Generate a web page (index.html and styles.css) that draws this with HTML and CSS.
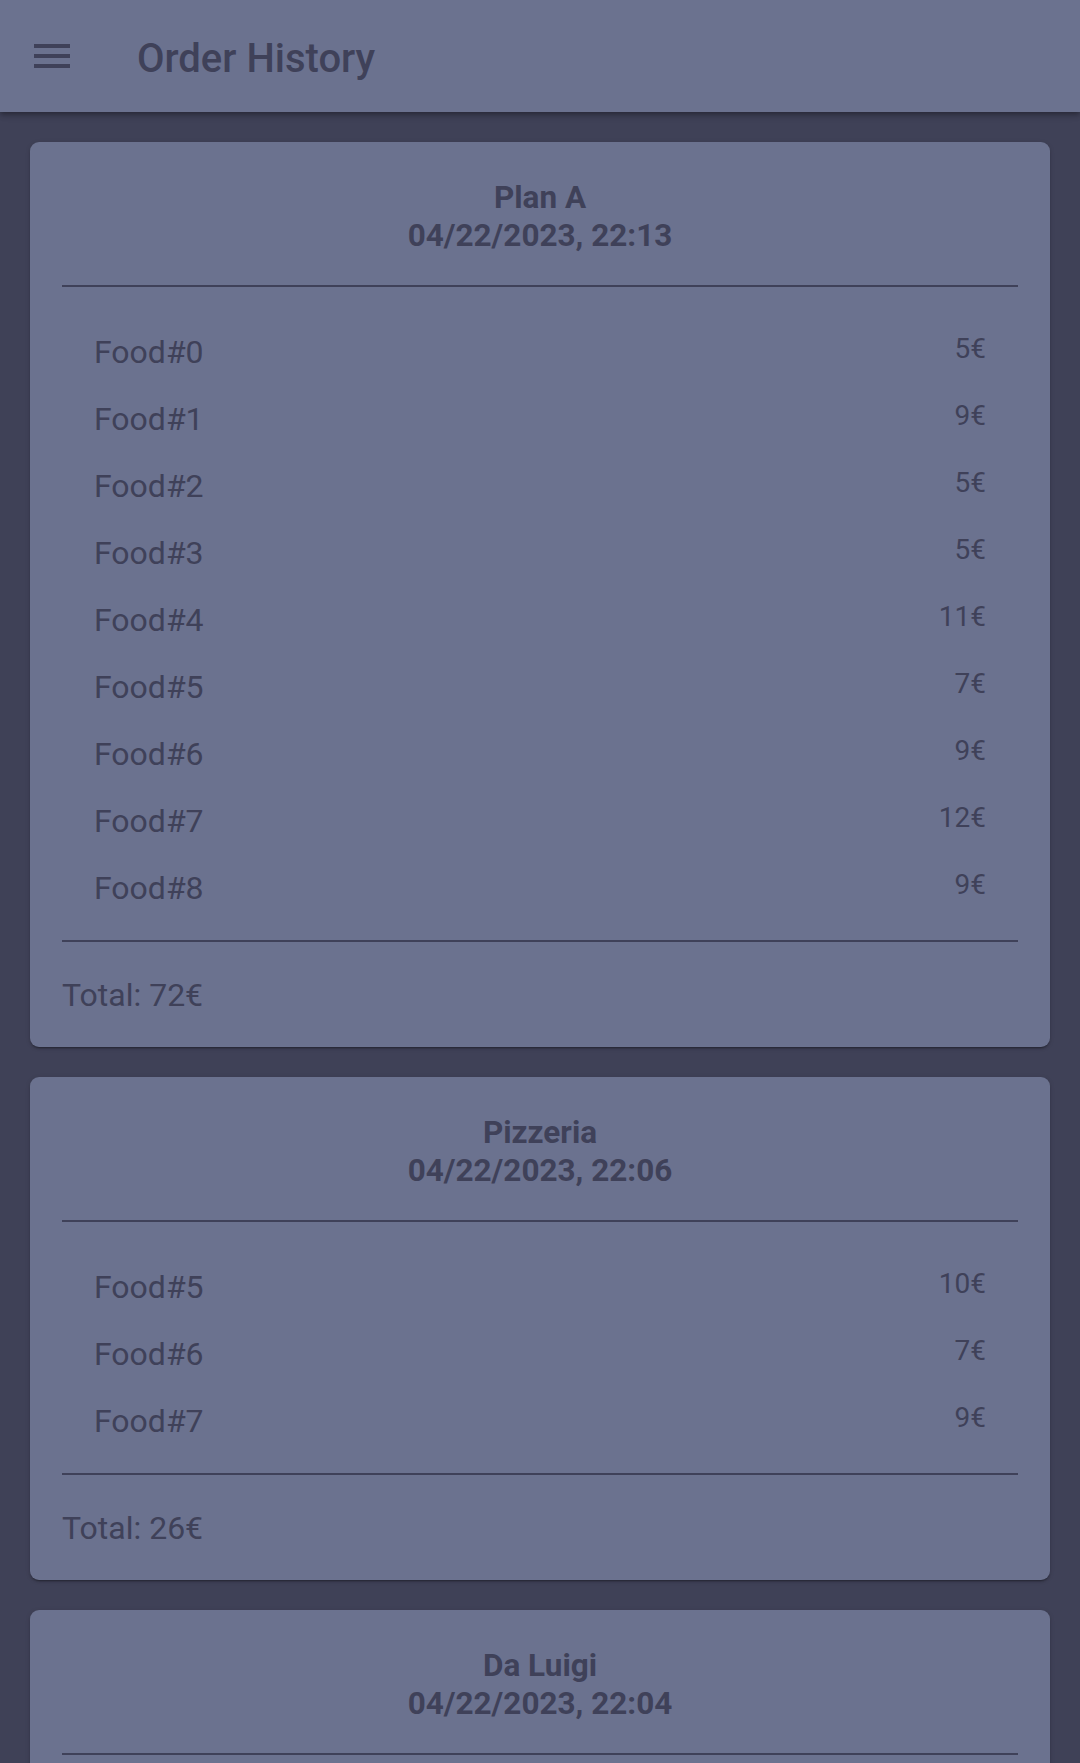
FILE: index.html
```html
<!DOCTYPE html>
<html lang="en">
<head>
<meta charset="utf-8">
<title>Order History</title>
<link rel="stylesheet" href="styles.css">
</head>
<body>
<header class="toolbar">
  <button class="menu-btn" aria-label="menu">
    <svg viewBox="0 0 512 512" width="48" height="48"><path d="M64 384h384v-42.67H64zm0-106.67h384v-42.66H64zM64 128v42.67h384V128z" fill="currentColor"/></svg>
  </button>
  <h1 class="toolbar-title">Order History</h1>
</header>
<main class="content">
  <section class="card">
    <div class="card-head">
      <div class="card-title">Plan A</div>
      <div class="card-title">04/22/2023, 22:13</div>
    </div>
    <ul class="items">
      <li class="item"><span class="item-name">Food#0</span><span class="item-price">5€</span></li>
      <li class="item"><span class="item-name">Food#1</span><span class="item-price">9€</span></li>
      <li class="item"><span class="item-name">Food#2</span><span class="item-price">5€</span></li>
      <li class="item"><span class="item-name">Food#3</span><span class="item-price">5€</span></li>
      <li class="item"><span class="item-name">Food#4</span><span class="item-price">11€</span></li>
      <li class="item"><span class="item-name">Food#5</span><span class="item-price">7€</span></li>
      <li class="item"><span class="item-name">Food#6</span><span class="item-price">9€</span></li>
      <li class="item"><span class="item-name">Food#7</span><span class="item-price">12€</span></li>
      <li class="item"><span class="item-name">Food#8</span><span class="item-price">9€</span></li>
    </ul>
    <div class="total">Total: 72€</div>
  </section>
  <section class="card">
    <div class="card-head">
      <div class="card-title">Pizzeria</div>
      <div class="card-title">04/22/2023, 22:06</div>
    </div>
    <ul class="items">
      <li class="item"><span class="item-name">Food#5</span><span class="item-price">10€</span></li>
      <li class="item"><span class="item-name">Food#6</span><span class="item-price">7€</span></li>
      <li class="item"><span class="item-name">Food#7</span><span class="item-price">9€</span></li>
    </ul>
    <div class="total">Total: 26€</div>
  </section>
  <section class="card">
    <div class="card-head">
      <div class="card-title">Da Luigi</div>
      <div class="card-title">04/22/2023, 22:04</div>
    </div>
    <ul class="items">
      <li class="item"><span class="item-name">Food#1</span><span class="item-price">8€</span></li>
      <li class="item"><span class="item-name">Food#2</span><span class="item-price">6€</span></li>
    </ul>
    <div class="total">Total: 14€</div>
  </section>
</main>
</body>
</html>
```
FILE: styles.css
```css
html, body {
  margin: 0;
  padding: 0;
  background: #3f4157;
  font-family: Roboto, "Liberation Sans", sans-serif;
  color: #3f4159;
}
* { box-sizing: border-box; }

.toolbar {
  position: relative;
  z-index: 2;
  height: 112px;
  background: #6b728f;
  display: flex;
  align-items: center;
  padding-left: 28px;
  box-shadow: 0 2px 4px -1px rgba(0,0,0,0.2), 0 4px 5px 0 rgba(0,0,0,0.14), 0 1px 10px 0 rgba(0,0,0,0.12);
}
.menu-btn {
  width: 48px;
  height: 48px;
  padding: 0;
  margin: 0;
  border: 0;
  background: none;
  color: #3f4159;
  display: flex;
}
.menu-btn svg { display: block; }
.toolbar-title {
  margin: 0 0 0 61px;
  padding-top: 6px;
  font-size: 40px;
  font-weight: 500;
  line-height: 48px;
}

.content {
  display: flex;
  flex-direction: column;
  gap: 30px;
  padding: 30px 30px 0;
}
.card {
  background: #6b728f;
  border-radius: 9px;
  padding: 0 32px;
  box-shadow: 0 3px 1px -2px rgba(0,0,0,0.2), 0 2px 2px 0 rgba(0,0,0,0.14), 0 1px 5px 0 rgba(0,0,0,0.12);
}
.card-head {
  padding: 37px 0 30px;
  border-bottom: 2px solid #3f4159;
  text-align: center;
}
.card-title {
  font-size: 31.5px;
  font-weight: 700;
  line-height: 38px;
}
.items {
  list-style: none;
  margin: 0;
  padding: 32px 32px 18px;
  border-bottom: 2px solid #3f4159;
}
.item {
  height: 67px;
  display: flex;
  align-items: center;
  justify-content: space-between;
}
.item-name {
  font-size: 32px;
  line-height: 37px;
}
.item-price {
  font-size: 28px;
  line-height: 32px;
  padding-bottom: 8px;
}
.total {
  padding: 35px 0 33px;
  font-size: 32px;
  line-height: 37px;
}
```
